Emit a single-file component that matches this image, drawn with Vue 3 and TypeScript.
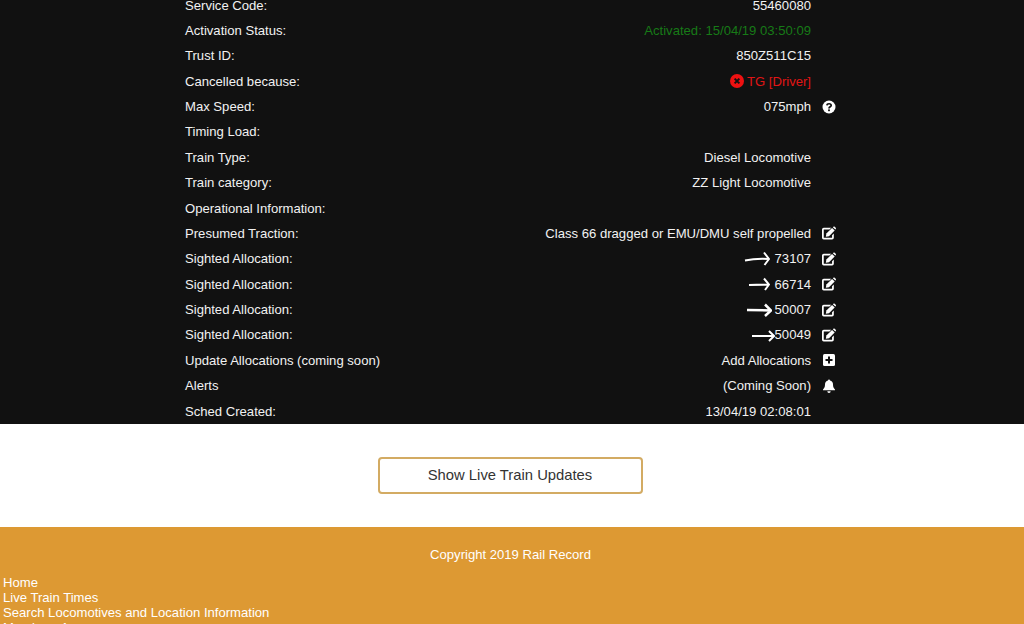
<script setup lang="ts">
interface Row {
  label: string;
  value?: string;
  tone?: string;
  status?: boolean;
  arrow?: string;
  icon?: string;
}

const rows: Row[] = [
  { label: 'Service Code:', value: '55460080' },
  { label: 'Activation Status:', value: 'Activated: 15/04/19 03:50:09', tone: 'green' },
  { label: 'Trust ID:', value: '850Z511C15' },
  { label: 'Cancelled because:', value: 'TG [Driver]', tone: 'red', status: true },
  { label: 'Max Speed:', value: '075mph', icon: 'help' },
  { label: 'Timing Load:' },
  { label: 'Train Type:', value: 'Diesel Locomotive' },
  { label: 'Train category:', value: 'ZZ Light Locomotive' },
  { label: 'Operational Information:' },
  { label: 'Presumed Traction:', value: 'Class 66 dragged or EMU/DMU self propelled', icon: 'edit' },
  { label: 'Sighted Allocation:', value: '73107', icon: 'edit', arrow: 'a' },
  { label: 'Sighted Allocation:', value: '66714', icon: 'edit', arrow: 'b' },
  { label: 'Sighted Allocation:', value: '50007', icon: 'edit', arrow: 'c' },
  { label: 'Sighted Allocation:', value: '50049', icon: 'edit', arrow: 'd' },
  { label: 'Update Allocations (coming soon)', value: 'Add Allocations', icon: 'plus' },
  { label: 'Alerts', value: '(Coming Soon)', icon: 'bell' },
  { label: 'Sched Created:', value: '13/04/19 02:08:01' },
];

const footerLinks = ['Home', 'Live Train Times', 'Search Locomotives and Location Information', 'Members Area'];
</script>

<template>
  <div class="page">
    <section class="details">
      <div v-for="(row, i) in rows" :key="i" class="row">
        <span class="label">{{ row.label }}</span>
        <span class="value" :class="row.tone">
          <svg v-if="row.status" class="status" viewBox="0 0 16 16">
            <circle cx="8" cy="8" r="8" fill="#ee1111" />
            <path d="M5.300 5.300l5.400 5.400M10.700 5.300l-5.400 5.400" stroke="#111" stroke-width="2.200" />
          </svg>
          <svg v-if="row.arrow === 'a'" class="arrow a" viewBox="0 0 26 16">
            <path d="M1 9.500C8 8 16 7.500 25 8M20 1.500l5 6.500L20.500 14" />
          </svg>
          <svg v-if="row.arrow === 'b'" class="arrow b" viewBox="0 0 22 16">
            <path d="M1 9L21 8.500M16 2.500l5 6L17 14" />
          </svg>
          <svg v-if="row.arrow === 'c'" class="arrow c" viewBox="0 0 26 16">
            <path d="M1 8L25 8.500M19 2.500l6 6L19 14" />
          </svg>
          <svg v-if="row.arrow === 'd'" class="arrow d" viewBox="0 0 24 16">
            <path d="M1 9H23M18 4l5 5-5 5" />
          </svg>
          {{ row.value }}
        </span>
        <span class="icon">
          <svg v-if="row.icon === 'help'" viewBox="0 0 14 14">
            <circle cx="7" cy="7" r="6.500" fill="#fff" />
            <path d="M4.900 5.400C5 3.200 9.200 3.200 9.200 5.400 9.200 6.800 7 6.800 7 8.400" fill="none" stroke="#111" stroke-width="1.700" />
            <rect x="6.100" y="9.400" width="1.800" height="1.800" fill="#111" />
          </svg>
          <svg v-else-if="row.icon === 'edit'" class="edit" viewBox="0 0 16 15">
            <path d="M10.500 1.500H2a2 2 0 0 0-2 2V13a2 2 0 0 0 2 2h9.500a2 2 0 0 0 2-2V8l-2 2v3H2V3.500h6.500z" fill="#fff" />
            <path d="M5 8.200L11.500 1.700l3 3L8 11.200l-3.600.6z" fill="#fff" />
            <path d="M12.400.9l.5-.5a1.200 1.200 0 0 1 1.700 0l1 1a1.200 1.200 0 0 1 0 1.700l-.5.500z" fill="#fff" />
          </svg>
          <svg v-else-if="row.icon === 'plus'" viewBox="0 0 14 14">
            <rect x="1" y="1" width="12" height="12" rx="1.500" fill="#fff" />
            <path d="M7 3.500v7M3.500 7h7" stroke="#111" stroke-width="2" />
          </svg>
          <svg v-else-if="row.icon === 'bell'" viewBox="0 0 14 14">
            <path d="M7 .5a1 1 0 0 1 1 1c2 .4 3 2 3 4 0 2.800.8 3.800 2 5v.8H1v-.8c1.200-1.200 2-2.200 2-5 0-2 1-3.600 3-4a1 1 0 0 1 1-1z" fill="#fff" />
            <path d="M5.300 12.200h3.400a1.700 1.700 0 0 1-3.400 0z" fill="#fff" />
          </svg>
        </span>
      </div>
    </section>

    <section class="actions">
      <button class="live-btn" type="button">Show Live Train Updates</button>
    </section>

    <footer class="footer">
      <p class="copyright">Copyright 2019 Rail Record</p>
      <a v-for="link in footerLinks" :key="link" class="foot-link">{{ link }}</a>
    </footer>
  </div>
</template>

<style>
html,
body {
  margin: 0;
  overflow: hidden;
}
</style>

<style scoped>
.page {
  height: 624px;
  overflow: hidden;
  font-family: 'Liberation Sans', Arial, sans-serif;
  font-size: 13.100px;
}

.details {
  margin-top: -7.700px;
  padding: 0 188px 0 185px;
  height: 431.700px;
  box-sizing: border-box;
  background: #111;
  color: #f2f2f2;
}

.row {
  display: flex;
  align-items: center;
  height: 25.375px;
}

.label {
  flex: 1;
}

.value {
  display: flex;
  align-items: center;
  white-space: pre;
}

.green {
  color: #177a17;
}

.red {
  color: #e01515;
}

.status {
  width: 14px;
  height: 14px;
}

.arrow {
  fill: none;
  stroke: #fff;
  stroke-width: 2;
  height: 16px;
  margin-right: 1px;
}

.arrow.a {
  width: 26px;
}

.arrow.b {
  width: 22px;
}

.arrow.c {
  width: 26px;
  margin-right: -1px;
  stroke-width: 2.500;
}

.arrow.d {
  width: 24px;
  margin-right: -4px;
}

.icon {
  width: 14px;
  height: 14px;
  margin-left: 11px;
  display: flex;
}

.icon svg {
  width: 14px;
  height: 14px;
}

.icon svg.edit {
  width: 15px;
  height: 14px;
}

.actions {
  height: 103px;
  display: flex;
  justify-content: center;
  padding: 33px 4px 0 0;
  box-sizing: border-box;
  background: #fff;
}

.live-btn {
  width: 265px;
  height: 37px;
  padding-bottom: 3px;
  background: #fff;
  border: 2px solid #d3ab63;
  border-radius: 4px;
  color: #333;
  font-family: inherit;
  font-size: 14.800px;
}

.footer {
  background: #dd9933;
  color: #fff;
  height: 200px;
  padding: 20px 3px 0;
}

.copyright {
  margin: 0 0 12.400px;
  padding-right: 3px;
  text-align: center;
  line-height: 16px;
}

.foot-link {
  display: block;
  line-height: 15px;
}
</style>
